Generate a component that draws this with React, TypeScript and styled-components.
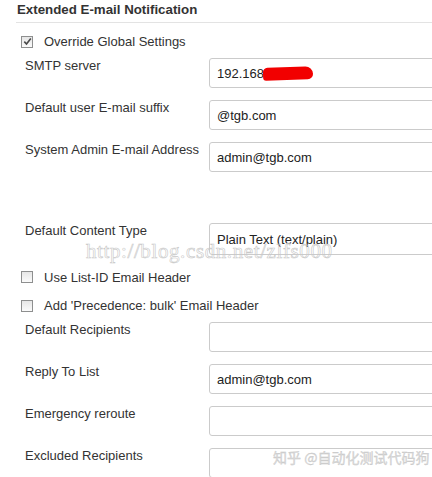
import React from 'react';
import styled, { createGlobalStyle } from 'styled-components';

const GlobalStyle = createGlobalStyle`
    html, body {
        margin: 0;
        padding: 0;
        background: #fff;
        overflow: hidden;
    }
    body {
        font-family: "Liberation Sans", Arial, sans-serif;
        color: #333;
        font-size: 13px;
    }
`;

const Page = styled.div`
    position: relative;
    width: 432px;
    height: 477px;
    overflow: hidden;
`;

const SectionHeader = styled.div`
    margin-left: 16px;
    height: 22px;
    border-bottom: 1px solid #e3e3e3;
    padding-left: 1px;
    font-weight: bold;
    font-size: 13.3px;
    line-height: 20px;
    color: #333;
`;

const CheckRow = styled.div<{ $h: number }>`
    display: flex;
    align-items: center;
    gap: 11px;
    height: ${p => p.$h}px;
    padding-left: 21px;
    font-size: 13px;
`;

const Box = styled.span`
    width: 10px;
    height: 10px;
    border: 1px solid #8e8f8f;
    background: linear-gradient(#e6e6e6, #fbfbfb);
    display: inline-flex;
    align-items: center;
    justify-content: center;
`;

const FieldRow = styled.div<{ $h?: number }>`
    display: grid;
    grid-template-columns: 184px 1fr;
    height: ${p => p.$h ?? 42}px;
    padding-left: 25px;
    box-sizing: border-box;
`;

const Label = styled.div`
    padding-top: 3px;
    line-height: 16px;
    font-size: 13px;
    white-space: nowrap;
`;

const TextBox = styled.div<{ $tall?: boolean }>`
    margin-top: 3px;
    height: ${p => (p.$tall ? 30 : 28)}px;
    width: 260px;
    border: 1px solid #cbcbcb;
    border-radius: 3px;
    box-sizing: content-box;
    display: flex;
    align-items: center;
    padding-left: 7px;
    font-size: 13px;
    color: #222;
    white-space: nowrap;
`;

const Scribble = styled.span`
    display: inline-block;
    width: 50px;
    height: 13px;
    margin-left: -1px;
    background: #f20000;
    border-radius: 6px 10px 7px 4px;
    transform: rotate(-2deg);
`;

const Spacer = styled.div<{ $h: number }>`
    height: ${p => p.$h}px;
`;

const CsdnMark = styled.div`
    position: absolute;
    left: 86px;
    top: 239px;
    font-family: "Liberation Serif", serif;
    font-size: 21px;
    letter-spacing: 0.6px;
    color: transparent;
    -webkit-text-stroke: 0.6px #c8c8c8;
    pointer-events: none;
`;

const ZhihuMark = styled.div`
    position: absolute;
    left: 273px;
    top: 447px;
    font-family: "Noto Sans CJK SC", sans-serif;
    font-size: 14px;
    color: #dadada;
    -webkit-text-stroke: 0.3px #c4c4c4;
    pointer-events: none;
`;

const Check = ({ checked }: { checked?: boolean }) => (
    <Box>
        {checked && (
            <svg width="9" height="9" viewBox="0 0 9 9">
                <path d="M1.3 4.6 L3.5 7 L7.8 1.4" fill="none" stroke="#4a4a4a" strokeWidth="1.6" />
            </svg>
        )}
    </Box>
);

export default function App() {
    return (
        <Page>
            <GlobalStyle />
            <SectionHeader>Extended E-mail Notification</SectionHeader>
            <Spacer $h={5} />
            <CheckRow $h={27}>
                <Check checked />
                <span>Override Global Settings</span>
            </CheckRow>
            <FieldRow>
                <Label>SMTP server</Label>
                <TextBox>192.168<Scribble /></TextBox>
            </FieldRow>
            <FieldRow>
                <Label>Default user E-mail suffix</Label>
                <TextBox>@tgb.com</TextBox>
            </FieldRow>
            <FieldRow>
                <Label>System Admin E-mail Address</Label>
                <TextBox>admin@tgb.com</TextBox>
            </FieldRow>
            <Spacer $h={39} />
            <FieldRow>
                <Label>Default Content Type</Label>
                <TextBox $tall>Plain Text (text/plain)</TextBox>
            </FieldRow>
            <CheckRow $h={30}>
                <Check />
                <span>Use List-ID Email Header</span>
            </CheckRow>
            <CheckRow $h={27}>
                <Check />
                <span>Add 'Precedence: bulk' Email Header</span>
            </CheckRow>
            <FieldRow>
                <Label>Default Recipients</Label>
                <TextBox />
            </FieldRow>
            <FieldRow>
                <Label>Reply To List</Label>
                <TextBox>admin@tgb.com</TextBox>
            </FieldRow>
            <FieldRow>
                <Label>Emergency reroute</Label>
                <TextBox />
            </FieldRow>
            <FieldRow>
                <Label>Excluded Recipients</Label>
                <TextBox />
            </FieldRow>
            <CsdnMark>http://blog.csdn.net/zlfs000</CsdnMark>
            <ZhihuMark>知乎 @自动化测试代码狗</ZhihuMark>
        </Page>
    );
}
